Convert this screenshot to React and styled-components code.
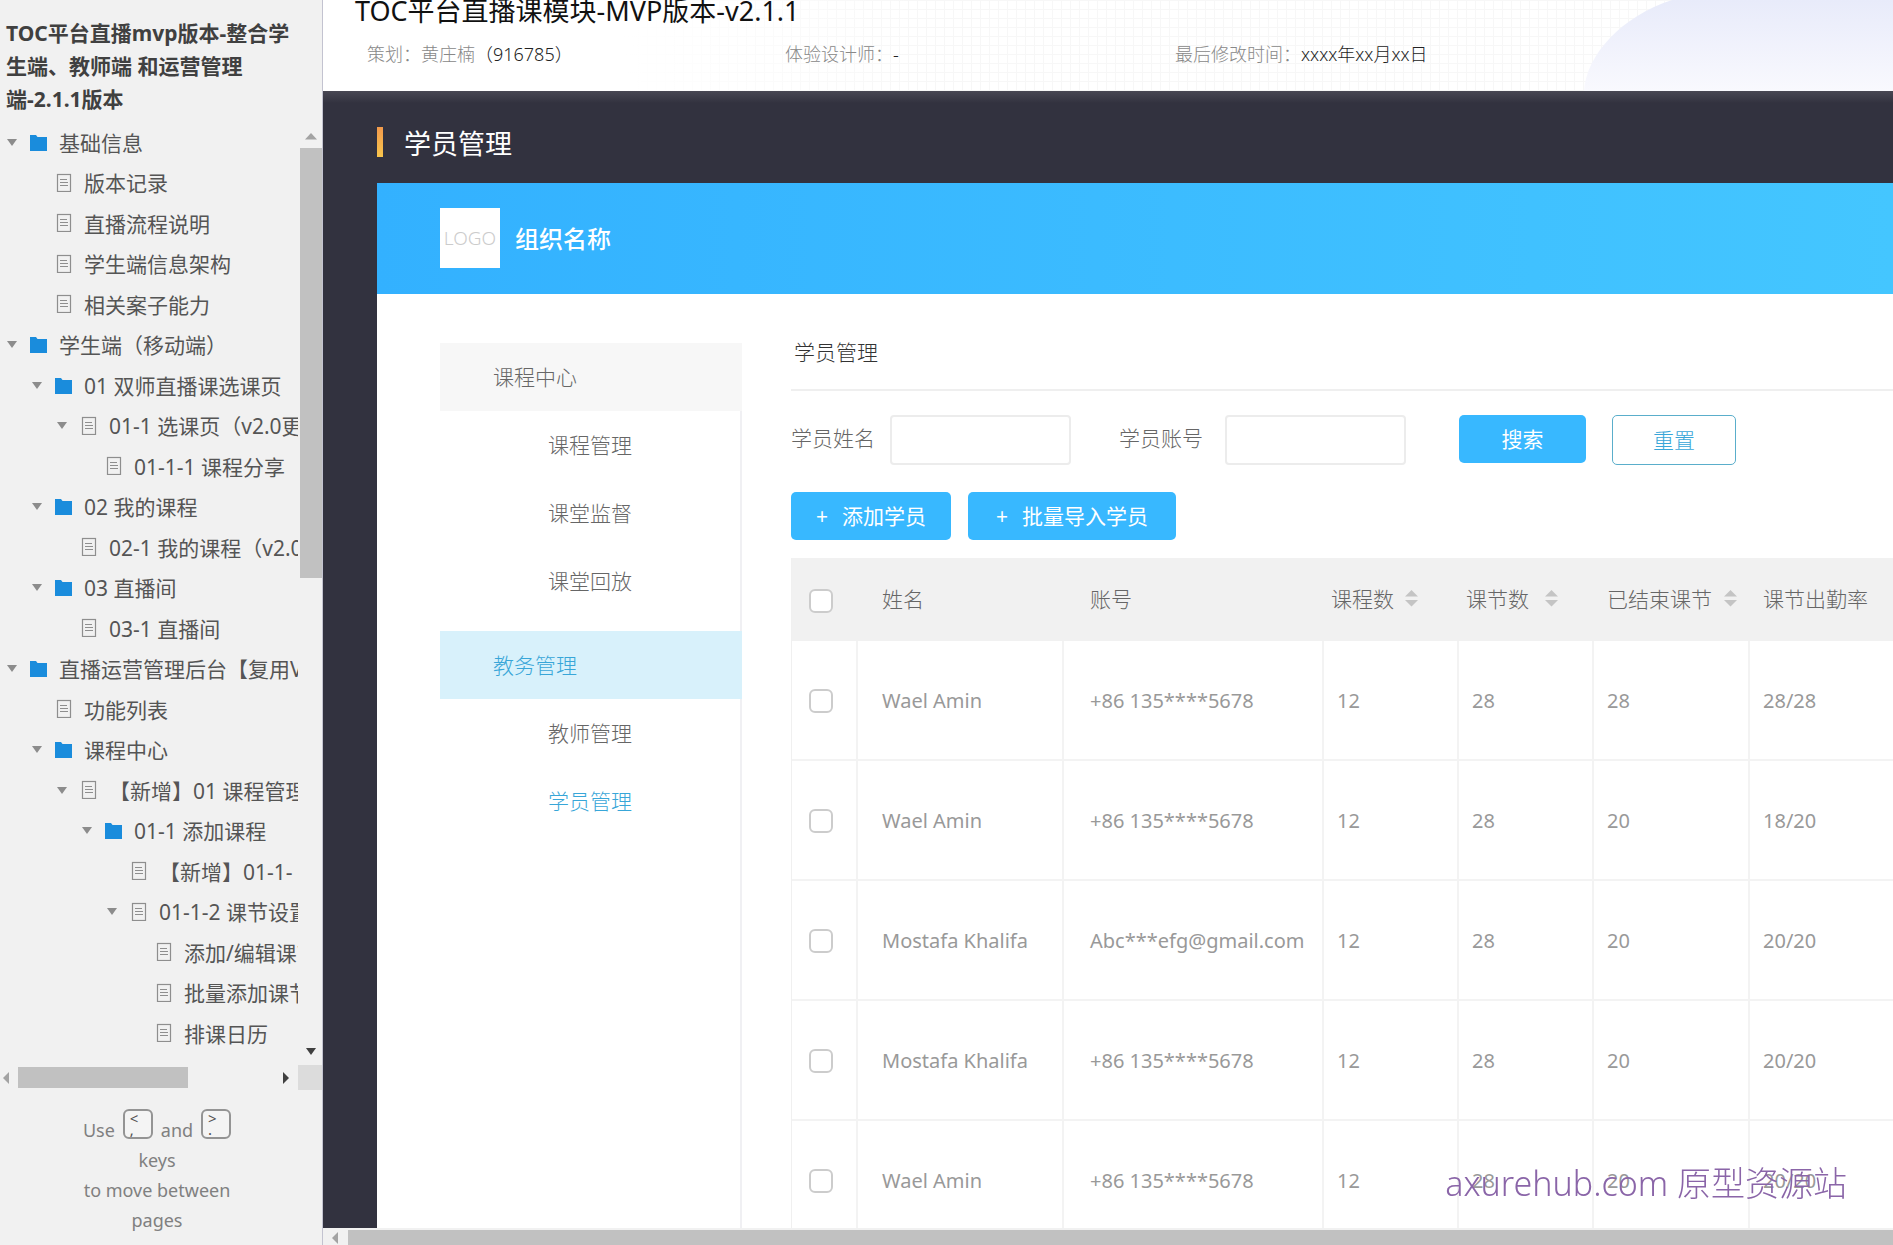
import React from "react";
import styled, { createGlobalStyle, css } from "styled-components";

const TREE = [
  { level: 0, kind: "folder", label: "基础信息" },
  { level: 1, kind: "page", label: "版本记录" },
  { level: 1, kind: "page", label: "直播流程说明" },
  { level: 1, kind: "page", label: "学生端信息架构" },
  { level: 1, kind: "page", label: "相关案子能力" },
  { level: 0, kind: "folder", label: "学生端（移动端）" },
  { level: 1, kind: "folder", label: "01 双师直播课选课页" },
  { level: 2, kind: "page", open: true, label: "01-1 选课页（v2.0更新）" },
  { level: 3, kind: "page", label: "01-1-1 课程分享" },
  { level: 1, kind: "folder", label: "02 我的课程" },
  { level: 2, kind: "page", label: "02-1 我的课程（v2.0更新）" },
  { level: 1, kind: "folder", label: "03 直播间" },
  { level: 2, kind: "page", label: "03-1 直播间" },
  { level: 0, kind: "folder", label: "直播运营管理后台【复用V" },
  { level: 1, kind: "page", label: "功能列表" },
  { level: 1, kind: "folder", label: "课程中心" },
  { level: 2, kind: "page", open: true, label: "【新增】01 课程管理" },
  { level: 3, kind: "folder", label: "01-1 添加课程" },
  { level: 4, kind: "page", label: "【新增】01-1-" },
  { level: 4, kind: "page", open: true, label: "01-1-2 课节设置" },
  { level: 5, kind: "page", label: "添加/编辑课节" },
  { level: 5, kind: "page", label: "批量添加课节" },
  { level: 5, kind: "page", label: "排课日历" },
];

const MENU = [
  { title: "课程中心", items: ["课程管理", "课堂监督", "课堂回放"] },
  { title: "教务管理", active: true, items: ["教师管理", "学员管理"] },
];

const COLUMNS = [
  { label: "姓名", width: 206, pad: 24 },
  { label: "账号", width: 260, pad: 26 },
  { label: "课程数", width: 135, pad: 7, sortGap: 11 },
  { label: "课节数", width: 135, pad: 7, sortGap: 16 },
  { label: "已结束课节", width: 156, pad: 13, sortGap: 12 },
  { label: "课节出勤率", pad: 13 },
];

const STUDENTS = [
  ["Wael Amin", "+86 135****5678", "12", "28", "28", "28/28"],
  ["Wael Amin", "+86 135****5678", "12", "28", "20", "18/20"],
  ["Mostafa Khalifa", "Abc***efg@gmail.com", "12", "28", "20", "20/20"],
  ["Mostafa Khalifa", "+86 135****5678", "12", "28", "20", "20/20"],
  ["Wael Amin", "+86 135****5678", "12", "28", "20", "20/20"],
];

const Arrow = ({ d, color }) => (
  <svg width="12" height="12" viewBox="0 0 12 12" aria-hidden="true">
    <path d={d} fill={color} />
  </svg>
);

const UP = "M0 9.5 6 3l6 6.5z";
const DOWN = "M1 3h10L6 10z";
const LEFT = "M9 0v12L3 6z";
const RIGHT = "M3 0v12l6-6z";

const FolderIcon = () => (
  <svg width="18" height="18" viewBox="0 0 18 18" aria-hidden="true">
    <path d="M0 2h6l1.500 2H17v14H0z" fill="#1a8cdc" />
  </svg>
);

const PageIcon = () => (
  <svg width="18" height="19" viewBox="0 0 18 19" aria-hidden="true">
    <rect x="2.500" y="1.500" width="13" height="17" fill="none" stroke="#8e8e8e" strokeWidth="1.200" />
    <path d="M5 6.500h7M5 9.500h8M5 12.500h8" stroke="#8e8e8e" strokeWidth="1.200" />
  </svg>
);

const SortIcon = () => (
  <svg width="13" height="18" viewBox="0 0 13 18" aria-hidden="true">
    <path d="M6.500 1 13 7.500H0zM0 11h13l-6.500 6.500z" fill="#c4c4c4" />
  </svg>
);

const TreeNode = ({ node }) => (
  <TreeRow $level={node.level}>
    <Caret>
      {(node.kind === "folder" || node.open) && (
        <CaretButton aria-label={`折叠 ${node.label}`}>
          <Arrow d={DOWN} color="#8c8c8c" />
        </CaretButton>
      )}
    </Caret>
    <TreeLink href="#">
      {node.kind === "folder" ? <FolderIcon /> : <PageIcon />}
      <span>{node.label}</span>
    </TreeLink>
  </TreeRow>
);

const Sidebar = () => (
  <SidebarWrapper>
    <ProjectTitle>
      TOC平台直播mvp版本-整合学生端、教师端 和运营管理端-2.1.1版本
    </ProjectTitle>
    <TreeArea>
      <TreeList>
        {TREE.map((node) => (
          <TreeNode key={node.label} node={node} />
        ))}
      </TreeList>
      <VerticalBar>
        <Arrow d={UP} color="#a3a3a3" />
        <VerticalThumb />
        <Arrow d={DOWN} color="#404040" />
      </VerticalBar>
      <HorizontalBar>
        <Arrow d={LEFT} color="#a3a3a3" />
        <HorizontalThumb />
        <Arrow d={RIGHT} color="#404040" />
      </HorizontalBar>
      <BarCorner />
    </TreeArea>
    <Hint>
      <HintLine>
        Use
        <Key>
          <span>&lt;</span>
          <span>,</span>
        </Key>
        and
        <Key>
          <span>&gt;</span>
          <span>.</span>
        </Key>
      </HintLine>
      keys
      <br />
      to move between
      <br />
      pages
    </Hint>
  </SidebarWrapper>
);

const DocumentHeader = () => (
  <DocHeader>
    <HeaderArt width="309" height="91" viewBox="0 0 309 91" aria-hidden="true">
      <defs>
        <linearGradient id="glow" x1="0" y1="0" x2="0" y2="1">
          <stop offset="0" stopColor="#e8ebfa" />
          <stop offset="1" stopColor="#f9f9fe" />
        </linearGradient>
      </defs>
      <path d="M0 91C2 55 38 16 88 0h221v91z" fill="url(#glow)" />
    </HeaderArt>
    <DocTitle>TOC平台直播课模块-MVP版本-v2.1.1</DocTitle>
    <MetaList>
      <Meta>
        策划：黄庄楠<MetaValue>（916785）</MetaValue>
      </Meta>
      <Meta>
        体验设计师：<MetaValue>-</MetaValue>
      </Meta>
      <Meta>
        最后修改时间：<MetaValue>xxxx年xx月xx日</MetaValue>
      </Meta>
    </MetaList>
  </DocHeader>
);

const SideMenu = () => (
  <MenuNav>
    {MENU.map((group) => (
      <MenuGroup key={group.title}>
        <MenuTitle $active={group.active}>{group.title}</MenuTitle>
        {group.items.map((item) => (
          <MenuLink key={item} href="#" $active={item === "学员管理"}>
            {item}
          </MenuLink>
        ))}
      </MenuGroup>
    ))}
  </MenuNav>
);

const StudentTable = () => (
  <Table>
    <colgroup>
      <Col $width={66} />
      {COLUMNS.map((column) => (
        <Col key={column.label} $width={column.width} />
      ))}
    </colgroup>
    <thead>
      <tr>
        <HeadCell $pad={17}>
          <Checkbox aria-label="全选" />
        </HeadCell>
        {COLUMNS.map((column) => (
          <HeadCell key={column.label} $pad={column.pad}>
            <HeadLabel $gap={column.sortGap}>
              {column.label}
              {column.sortGap && <SortIcon />}
            </HeadLabel>
          </HeadCell>
        ))}
      </tr>
    </thead>
    <tbody>
      {STUDENTS.map((student, row) => (
        <tr key={row}>
          <Cell $pad={17}>
            <Checkbox aria-label={`选择 ${student[0]}`} />
          </Cell>
          {student.map((value, i) => (
            <Cell key={i} $pad={i < 2 ? COLUMNS[i].pad : 13}>
              {value}
            </Cell>
          ))}
        </tr>
      ))}
    </tbody>
  </Table>
);

const StudentPanel = () => (
  <Panel>
    <PanelTitle>学员管理</PanelTitle>
    <Filters>
      <Label htmlFor="student-name">学员姓名</Label>
      <TextInput id="student-name" />
      <Label htmlFor="student-account" $second>
        学员账号
      </Label>
      <TextInput id="student-account" />
      <SearchButton>搜索</SearchButton>
      <ResetButton>重置</ResetButton>
    </Filters>
    <Actions>
      <AddButton $pad={25}>
        <span>+</span>添加学员
      </AddButton>
      <AddButton $pad={28}>
        <span>+</span>批量导入学员
      </AddButton>
    </Actions>
    <StudentTable />
  </Panel>
);

const App = () => (
  <Page>
    <GlobalStyle />
    <Sidebar />
    <Main>
      <DocumentHeader />
      <Canvas>
        <SectionTitle>学员管理</SectionTitle>
        <Frame>
          <OrgBar>
            <Logo>LOGO</Logo>
            <OrgName>组织名称</OrgName>
          </OrgBar>
          <FrameBody>
            <SideMenu />
            <StudentPanel />
          </FrameBody>
        </Frame>
      </Canvas>
      <PageBar>
        <Arrow d={LEFT} color="#a3a3a3" />
        <PageThumb />
      </PageBar>
    </Main>
    <Watermark>axurehub.com 原型资源站</Watermark>
  </Page>
);

const GlobalStyle = createGlobalStyle`
  *, *::before, *::after {
    box-sizing: border-box;
  }

  body {
    margin: 0;
    overflow: hidden;
    font-family: "Noto Sans", "Noto Sans CJK SC", sans-serif;
    font-weight: 300;
  }

  h1, h2, h3, p, ul {
    margin: 0;
    padding: 0;
    font-weight: inherit;
  }

  a {
    color: inherit;
    text-decoration: none;
  }

  button, input {
    font: inherit;
  }

  svg {
    display: block;
    flex-shrink: 0;
  }
`;

const Page = styled.div`
  display: flex;
  height: 100vh;
  overflow: hidden;
`;

const SidebarWrapper = styled.aside`
  flex: 0 0 323px;
  display: flex;
  flex-direction: column;
  overflow: hidden;
  background: #f1f1f1;
  border-right: 1px solid #c3c3d0;
`;

const ProjectTitle = styled.h1`
  padding: 17px 20px 5px 6px;
  color: #404040;
  font-size: 21px;
  font-weight: 700;
  line-height: 33px;
`;

const TreeArea = styled.div`
  flex: 1;
  min-height: 0;
  display: grid;
  grid-template-columns: 1fr 24px;
  grid-template-rows: 1fr 25px;
`;

const TreeList = styled.ul`
  min-width: 0;
  min-height: 0;
  overflow: hidden;
  list-style: none;
`;

const TreeRow = styled.li`
  display: flex;
  align-items: center;
  height: 41px;
  padding-left: ${(p) => 6 + p.$level * 25}px;
  color: #555;
  font-size: 21px;
  font-weight: 400;
  white-space: nowrap;

  &:nth-child(even) {
    height: 40px;
  }
`;

const Caret = styled.span`
  flex: 0 0 24px;
`;

const CaretButton = styled.button`
  display: block;
  padding: 0;
  border: none;
  background: none;
`;

const TreeLink = styled.a`
  display: flex;
  align-items: center;
  gap: 11px;
`;

const VerticalBar = styled.div`
  display: flex;
  flex-direction: column;
  align-items: center;
  padding: 9px 0 8px 1px;
`;

const VerticalThumb = styled.div`
  width: 22px;
  height: 430px;
  margin: 6px 0 auto;
  background: #c1c1c1;
`;

const HorizontalBar = styled.div`
  display: flex;
  align-items: center;
  padding-right: 6px;
`;

const HorizontalThumb = styled.div`
  width: 170px;
  height: 21px;
  margin: 0 auto 0 6px;
  background: #c1c1c1;
`;

const BarCorner = styled.div`
  background: #dcdcdc;
`;

const Hint = styled.p`
  padding: 19px 8px 10px 0;
  color: #808080;
  font-size: 18px;
  font-weight: 400;
  line-height: 30px;
  text-align: center;
`;

const HintLine = styled.span`
  display: flex;
  align-items: flex-end;
  justify-content: center;
  gap: 8px;
`;

const Key = styled.kbd`
  display: flex;
  flex-direction: column;
  width: 30px;
  height: 30px;
  margin-bottom: 6px;
  padding: 2px 5px;
  border: 2px solid #949494;
  border-radius: 6px;
  background: #f4f4f4;
  color: #505050;
  font-family: inherit;
  font-size: 15px;
  line-height: 11px;
  text-align: left;
`;

const Main = styled.main`
  flex: 1;
  min-width: 0;
  display: flex;
  flex-direction: column;
`;

const DocHeader = styled.header`
  position: relative;
  height: 91px;
  overflow: hidden;
  background-color: #fff;
  background-image:
    linear-gradient(90deg, #fff 300px, transparent 600px),
    repeating-linear-gradient(90deg, #f7f7f7 0 1px, transparent 1px 9px),
    repeating-linear-gradient(#f7f7f7 0 1px, transparent 1px 9px);
`;

const HeaderArt = styled.svg`
  position: absolute;
  top: 0;
  right: 0;
`;

const DocTitle = styled.h2`
  margin-top: -9px;
  padding-left: 32px;
  color: #111;
  font-size: 27px;
  font-weight: 400;
  line-height: 40px;
`;

const MetaList = styled.div`
  display: grid;
  grid-template-columns: 418px 390px 1fr;
  padding: 9px 0 0 44px;
`;

const Meta = styled.span`
  color: #888;
  font-size: 18px;
  line-height: 28px;
`;

const MetaValue = styled.span`
  color: #222;
`;

const Canvas = styled.section`
  flex: 1;
  min-height: 0;
  display: flex;
  flex-direction: column;
  overflow: hidden;
  padding-left: 54px;
  background: #32323f linear-gradient(#484753, #32323f) top / 100% 12px no-repeat;
`;

const SectionTitle = styled.h2`
  display: flex;
  align-items: center;
  gap: 21px;
  flex: 0 0 92px;
  padding-top: 10px;
  color: #fff;
  font-size: 27px;
  font-weight: 400;

  &::before {
    content: "";
    width: 6px;
    height: 30px;
    background: linear-gradient(#f29a4c, #f8c54c);
  }
`;

const Frame = styled.div`
  flex: 1;
  min-height: 0;
  display: flex;
  flex-direction: column;
  background: #fff;
`;

const OrgBar = styled.div`
  flex: 0 0 111px;
  display: flex;
  align-items: center;
  gap: 15px;
  padding: 0 0 2px 63px;
  background: linear-gradient(90deg, #33b1ff, #44c6ff);
`;

const Logo = styled.div`
  width: 60px;
  height: 60px;
  background: #fff;
  color: #ccc;
  font-size: 19px;
  line-height: 60px;
  text-align: center;
`;

const OrgName = styled.span`
  color: #fff;
  font-size: 24px;
  font-weight: 500;
`;

const FrameBody = styled.div`
  flex: 1;
  min-height: 0;
  display: flex;
  padding-left: 63px;
`;

const MenuNav = styled.nav`
  flex: 0 0 302px;
  margin-top: 49px;
  border-right: 2px solid #f0f0f3;
  color: #666;
  font-size: 21px;
`;

const MenuGroup = styled.div`
  margin-bottom: 16px;
`;

const MenuTitle = styled.h3`
  margin-right: -2px;
  padding-left: 53px;
  background: ${(p) => (p.$active ? "#d8f1fb" : "#f7f7f7")};
  color: ${(p) => (p.$active ? "#38a6d8" : "inherit")};
  font-size: 21px;
  line-height: 68px;
`;

const MenuLink = styled.a`
  display: block;
  padding-left: 108px;
  color: ${(p) => (p.$active ? "#38a6d8" : "inherit")};
  line-height: 68px;
`;

const Panel = styled.section`
  flex: 1;
  min-width: 0;
  overflow: hidden;
  padding-left: 49px;
  color: #666;
  font-size: 21px;
`;

const PanelTitle = styled.h3`
  padding: 41px 0 20px 3px;
  border-bottom: 2px solid #efefef;
  color: #333;
  font-size: 21px;
  line-height: 34px;
`;

const Filters = styled.form`
  display: flex;
  align-items: flex-start;
  padding-top: 24px;
`;

const Label = styled.label`
  width: ${(p) => (p.$second ? 106 : 99)}px;
  margin-left: ${(p) => (p.$second ? 48 : 0)}px;
  line-height: 46px;
`;

const TextInput = styled.input`
  width: 181px;
  height: 50px;
  padding: 0 12px;
  border: 2px solid #ececec;
  border-radius: 4px;
  background: #fff;
`;

const buttonBase = css`
  padding: 0;
  border: none;
  border-radius: 5px;
  background: #38b8ff;
  color: #fff;
  line-height: 48px;
`;

const SearchButton = styled.button`
  ${buttonBase}
  width: 127px;
  margin-left: 53px;
  font-weight: 400;
`;

const ResetButton = styled.button`
  ${buttonBase}
  width: 124px;
  margin-left: 26px;
  border: 1px solid #5aaecb;
  background: #fff;
  color: #38a6d8;
`;

const Actions = styled.div`
  display: flex;
  gap: 17px;
  padding: 27px 0 18px;
`;

const AddButton = styled.button`
  ${buttonBase}
  display: flex;
  gap: 14px;
  padding: 0 ${(p) => p.$pad}px;
  font-weight: 400;
`;

const Table = styled.table`
  width: 100%;
  table-layout: fixed;
  border-collapse: separate;
  border-spacing: 0;
  border-left: 1px solid #f0f0f0;
`;

const Col = styled.col`
  width: ${(p) => (p.$width ? `${p.$width}px` : "auto")};
`;

const HeadCell = styled.th`
  height: 83px;
  padding: 0 0 0 ${(p) => p.$pad}px;
  background: #f1f1f1;
  font-weight: inherit;
  text-align: left;
`;

const HeadLabel = styled.span`
  display: flex;
  align-items: center;
  gap: ${(p) => p.$gap || 0}px;
  padding-bottom: 3px;
  white-space: nowrap;
`;

const Cell = styled.td`
  height: 120px;
  padding: 0 0 0 ${(p) => p.$pad}px;
  border-right: 2px solid #f3f3f3;
  border-bottom: 2px solid #f3f3f3;
  color: #999;
  font-size: 20px;
  font-weight: 400;

  &:last-child {
    border-right: none;
  }
`;

const Checkbox = styled.input.attrs({ type: "checkbox" })`
  display: block;
  appearance: none;
  width: 24px;
  height: 24px;
  margin: 2px 0 0;
  border: 2px solid #ccc;
  border-radius: 6px;
  background: #fff;
`;

const PageBar = styled.div`
  flex: 0 0 17px;
  display: flex;
  align-items: center;
  gap: 7px;
  padding: 2px 0 0 6px;
  background: #f1f1f1;
`;

const PageThumb = styled.div`
  flex: 1;
  align-self: stretch;
  background: #c1c1c1;
`;

const Watermark = styled.p`
  position: fixed;
  right: 46px;
  bottom: 38px;
  color: #8a65a8;
  font-size: 34px;
  line-height: 48px;
`;

export default App;
